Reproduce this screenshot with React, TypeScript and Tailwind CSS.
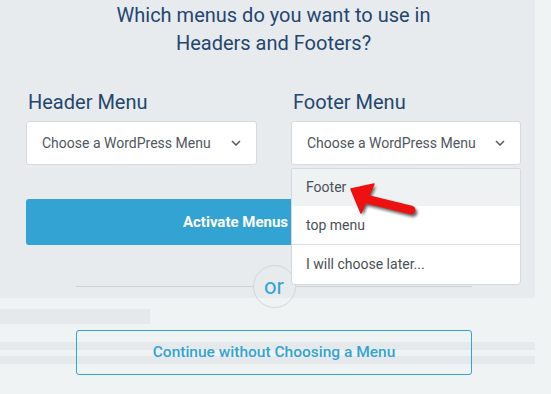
import React from "react";

const Chevron = () => (
  <svg width="10" height="6" viewBox="0 0 10 6" fill="none" stroke="#555b61" strokeWidth="1.5">
    <path d="M1 1l4 4 4-4" />
  </svg>
);

const MenuField = ({ label, open }: { label: string; open?: boolean }) => (
  <div className="relative">
    <div className="pl-[2px] text-[20px] leading-[24px] text-[#24466f]">{label}</div>
    <div className="mt-[7px] flex h-[44px] items-center justify-between rounded-[3px] border border-[#d6d9dd] bg-white pl-[15px] pr-[15px] text-[14px] text-[#50575e]">
      <span>Choose a WordPress Menu</span>
      <Chevron />
    </div>
    {open && (
      <div className="absolute left-0 right-0 top-full z-10 mt-[3px] overflow-hidden rounded-b-[4px] rounded-t-[2px] border border-[#d6d9dd] bg-white text-[14px] text-[#4a5056]">
        <div className="flex h-[37px] items-center bg-[#eef2f3] pl-[14px]">Footer</div>
        <div className="flex h-[38px] items-center pl-[14px]">top menu</div>
        <div className="flex h-[40px] items-center border-t border-[#dcdfe2] pl-[14px]">I will choose later...</div>
      </div>
    )}
  </div>
);

export default function App() {
  return (
    <div className="relative h-[394px] w-[551px] overflow-hidden bg-[#f0f3f4] font-['Roboto',sans-serif]">
      {/* Main panel */}
      <section className="h-[298px] w-[535px] bg-[#e8ebed]">
        <div className="ml-[26px] w-[495px] pt-[1px]">
          <h1 className="text-center text-[20px] leading-[28px] text-[#24466f]">
            Which menus do you want to use in
            <br />
            Headers and Footers?
          </h1>

          <div className="mt-[33px] grid grid-cols-[231px_230px] gap-x-[34px]">
            <MenuField label="Header Menu" />
            <MenuField label="Footer Menu" open />
          </div>

          <button className="mt-[34px] flex h-[46px] w-full items-center justify-center rounded-[3px] bg-[#33a3d3] pr-[76px] text-[15px] font-bold text-white">
            Activate Menus
          </button>

          {/* or divider */}
          <div className="relative z-[5] ml-[50px] mt-[20px] flex w-[396px] items-center">
            <div className="h-px flex-1 bg-[#cfd3d6]" />
            <div className="flex h-[43px] w-[43px] items-center justify-center rounded-full border border-[#d2d6d9] pt-[1px] text-[22px] leading-none text-[#33a3d3]">
              or
            </div>
            <div className="h-px flex-1 bg-[#cfd3d6]" />
          </div>
        </div>
      </section>

      {/* Lower section */}
      <section className="grid w-[535px]">
        <div className="col-start-1 row-start-1 flex flex-col pt-[11px]">
          <div className="h-[15px] w-[150px] bg-[#e6e9eb]" />
          <div className="mt-[18px] h-[8px] w-full bg-[#e6e9eb]" />
          <div className="mt-[6px] h-[8px] w-full bg-[#e6e9eb]" />
        </div>
        <div className="col-start-1 row-start-1 pl-[76px] pt-[32px]">
          <button className="flex h-[45px] w-[396px] items-center justify-center rounded-[3px] border border-[#33a3d3] text-[15.5px] font-medium text-[#33a3d3]">
            Continue without Choosing a Menu
          </button>
        </div>
      </section>

      {/* annotation arrow */}
      <svg
        className="pointer-events-none absolute left-[340px] top-[175px] z-20"
        width="90"
        height="50"
        viewBox="340 175 90 50"
      >
        <defs>
          <filter id="sh" x="-20%" y="-40%" width="140%" height="180%">
            <feGaussianBlur stdDeviation="1.5" />
          </filter>
        </defs>
        <g transform="translate(2 2.5)" filter="url(#sh)" opacity="0.6">
          <line x1="366" y1="199" x2="411" y2="210" stroke="#000" strokeWidth="9" strokeLinecap="round" />
          <polygon points="351,189 374,184 361,213" fill="#000" />
        </g>
        <line x1="366" y1="199" x2="411" y2="210" stroke="#ee1111" strokeWidth="9" strokeLinecap="round" />
        <polygon points="351,189 374,184 361,213" fill="#ee1111" strokeLinejoin="round" stroke="#ee1111" strokeWidth="1.5" />
      </svg>
    </div>
  );
}
